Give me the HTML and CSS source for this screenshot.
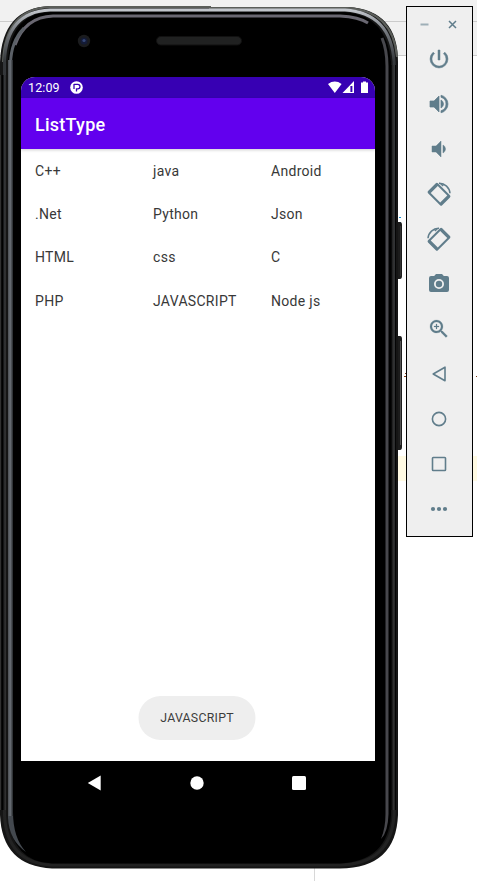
FILE: index.html
```html
<!DOCTYPE html>
<html lang="en">
<head>
<meta charset="utf-8">
<title>ListType</title>
<link rel="stylesheet" href="styles.css">
</head>
<body>
<div class="desktop">
  <div class="strip strip-one"></div>
  <div class="strip strip-two"></div>
  <div class="highlight"></div>
  <div class="divider"></div>
  <svg class="marks" width="80" height="165" viewBox="397 214 80 165">
    <path fill="#168bd0" d="M399 217h2v1h-2zM400 222h1v1h-1z"/>
    <path fill="#803b18" d="M404 376h3v1h-3zM405 373h1v1h-1zM476 376h1v1h-1z"/>
  </svg>

  <div class="phone">
    <svg class="shell" width="403" height="881" viewBox="0 0 403 881">
      <defs>
        <linearGradient id="rim" x1="0" x2="0" y1="0" y2="1">
          <stop offset="0" stop-color="#c2c6cc"/><stop offset=".025" stop-color="#75797f"/><stop offset=".06" stop-color="#34373a"/><stop offset="1" stop-color="#222"/>
        </linearGradient>
        <linearGradient id="left" x1="0" x2="1" y1="0" y2="0">
          <stop offset="0" stop-color="#4b4e52"/><stop offset=".45" stop-color="#6b7178"/><stop offset="1" stop-color="#24272a"/>
        </linearGradient>
      </defs>
      <path fill="#1c1c1c" d="M396 222h4q2 0 2 3v51q0 3-2 3h-4zM396 336h4q2 0 2 3v108q0 3-2 3h-4z"/>
      <path stroke="#555" d="M400.500 341v104"/>
      <path stroke="#333" d="M400.500 226v50"/>
      <path fill="#151515" d="M50 6H210V7H348Q398 10 398 62V815Q396 868 340 868.500H52Q2 866 0 815V62Q2 8 50 6Z"/>
      <path fill="none" stroke="#5b5e5a" stroke-width="2" d="M3 62Q5 9 50 7H210V8H348Q393 11 397 57"/>
      <path fill="none" stroke="url(#rim)" stroke-width="3" d="M4.500 815V62Q6 12 50 10H345Q391 13 394 62V815Q391 864 340 865H52Q7 863 4.500 815Z"/>
      <path fill="#000" d="M8 815V62Q10 14 50 12H345Q387 16 391 62V815Q388 861 340 863.500H52Q12 862 8 815Z"/>
      <path fill="none" stroke="#696771" stroke-width="3" d="M15 45Q25 17 53 16H340Q359 17 368 23"/>
      <path fill="none" stroke="#5b6067" stroke-width="3" d="M24 28Q11 41 10.500 64"/>
      <path fill="#43484e" d="M8 818V812H13Q13 838 26 852Q9 840 8 818Z"/>
      <rect x="8" y="60" width="5" height="756" fill="url(#left)"/>
      <path fill="none" stroke="#47474c" stroke-width="3" d="M382 38Q387 50 387 66V814"/>
      <path fill="#47474c" d="M385.500 814h3Q388 832 381 839Q385.500 828 385.500 814Z"/>
      <path stroke="#000" stroke-width="2" d="M2.500 75V810M390.500 65V810"/>
      <path stroke="#303030" d="M.5 75V810M5.500 75V810M393.500 65V810"/>
      <path stroke="#050505" d="M395.500 65V810"/>
      <circle cx="84" cy="41" r="6.200" fill="#1b1c1e"/>
      <circle cx="84" cy="41" r="3.500" fill="#141b36"/>
      <circle cx="84" cy="40.500" r="1.600" fill="#344777"/>
      <rect x="156.500" y="36.500" width="85" height="8.500" rx="4.200" fill="#202121" stroke="#111"/>
    </svg>

    <main class="screen">
      <header class="status">
        <span class="clock">12:09</span>
        <svg class="notice" width="13" height="13" viewBox="0 0 13 13">
          <circle cx="6.500" cy="6.500" r="6.300" fill="#fff"/>
          <path fill="none" stroke="#3700b3" stroke-width="1.300" d="M4 3.300h3.700a2.300 2.300 0 0 1 0 4.600h-1.200v2.600M4 3v5"/>
        </svg>
        <svg class="signals" width="41" height="13" viewBox="0 0 41 13">
          <path fill="#fff" d="M0 3Q6.800-1.800 13.600 3L6.800 12ZM26 0V12H14.500ZM35 .5h3v1h2v10.600h-7V1.500h2z"/>
          <path fill="#3700b3" d="M22.400 5h2v6h-2z"/>
        </svg>
      </header>
      <div class="appbar"><h1>ListType</h1></div>
      <div class="grid">
        <span>C++</span><span>java</span><span>Android</span>
        <span>.Net</span><span>Python</span><span>Json</span>
        <span>HTML</span><span>css</span><span>C</span>
        <span>PHP</span><span>JAVASCRIPT</span><span>Node js</span>
      </div>
      <div class="toast">JAVASCRIPT</div>
    </main>
    <nav class="nav">
      <svg width="16" height="16" viewBox="0 0 16 16"><path d="M.8 8 13.700.5v15z"/></svg>
      <svg width="16" height="16" viewBox="0 0 16 16"><circle cx="8" cy="8" r="6.700"/></svg>
      <svg width="16" height="16" viewBox="0 0 16 16"><rect x="1" y="1" width="14" height="14" rx="1.500"/></svg>
    </nav>
  </div>

  <aside class="toolbar">
    <div class="window">
      <svg width="9" height="9" viewBox="0 0 9 9"><path stroke="#9eafb7" stroke-width="2" d="M.5 4.500h8"/></svg>
      <svg width="9" height="9" viewBox="0 0 9 9"><path stroke="#607d8b" stroke-width="1.500" d="m1 1 7 7m0-7-7 7"/></svg>
    </div>
    <div class="tool"><svg viewBox="0 0 24 24"><path d="M13 3h-2v10h2V3zm4.830 2.170-1.420 1.420A6.920 6.920 0 0 1 19 12a7 7 0 1 1-11.410-5.420L6.170 5.170A8.930 8.930 0 0 0 3 12a9 9 0 0 0 18 0 8.930 8.930 0 0 0-3.170-6.830z" stroke="#607d8b" stroke-width=".5"/></svg></div>
    <div class="tool"><svg viewBox="0 0 24 24"><path d="M3 9v6h4l5 5V4L7 9H3zm13.500 3A4.500 4.500 0 0 0 14 7.970v8.050A4.500 4.500 0 0 0 16.500 12zM14 3.230v2.060a7 7 0 0 1 0 13.420v2.060a9 9 0 0 0 0-17.540z" stroke="#607d8b" stroke-width=".7"/></svg></div>
    <div class="tool"><svg viewBox="0 0 24 24"><path d="M18.500 12A4.500 4.500 0 0 0 16 7.970v8.050A4.500 4.500 0 0 0 18.500 12zM5 9v6h4l5 5V4L9 9H5z" stroke="#607d8b" stroke-width=".5"/></svg></div>
    <div class="tool"><svg viewBox="0 0 24 24"><g id="rotate"><path fill-rule="evenodd" transform="rotate(45 12 12.300)" d="M3.500 5.300h17a1.500 1.500 0 0 1 1.500 1.500v11a1.500 1.500 0 0 1-1.500 1.500h-17A1.500 1.500 0 0 1 2 17.800v-11a1.500 1.500 0 0 1 1.500-1.500zM5.300 7.300v10h13.400v-10z"/><path fill="none" stroke="#607d8b" stroke-width="1.500" d="M12 1.300A10.700 10.700 0 0 1 23 11.300"/><path d="m12 .8 5 2.300-1.500 1.500z"/></g></svg></div>
    <div class="tool"><svg viewBox="0 0 24 24"><use href="#rotate" transform="matrix(-1 0 0 1 24 0)"/></svg></div>
    <div class="tool"><svg viewBox="0 0 24 24"><circle cx="12" cy="12" r="3.200"/><path d="M9 2 7.170 4H4a2 2 0 0 0-2 2v12a2 2 0 0 0 2 2h16a2 2 0 0 0 2-2V6a2 2 0 0 0-2-2h-3.170L15 2H9zm3 15a5 5 0 1 1 0-10 5 5 0 0 1 0 10z"/></svg></div>
    <div class="tool"><svg viewBox="0 0 24 24"><path d="M15.500 14h-.79l-.28-.27a6.500 6.500 0 1 0-.7.700l.27.280v.79l5 4.990L20.490 19l-4.990-5zm-6 0a4.500 4.500 0 1 1 0-9 4.500 4.500 0 0 1 0 9zM12 10h-2v2H9v-2H7V9h2V7h1v2h2v1z" stroke="#607d8b" stroke-width=".2"/></svg></div>
    <div class="tool line"><svg viewBox="0 0 24 24"><path d="M6.200 12 18 5.200v13.600z"/></svg></div>
    <div class="tool line"><svg viewBox="0 0 24 24"><circle cx="12" cy="12" r="6.600"/></svg></div>
    <div class="tool line"><svg viewBox="0 0 24 24"><rect x="5.500" y="5.500" width="13" height="13" rx=".7"/></svg></div>
    <div class="tool"><svg viewBox="0 0 24 24"><circle cx="6" cy="12" r="2.100"/><circle cx="12" cy="12" r="2.100"/><circle cx="18" cy="12" r="2.100"/></svg></div>
  </aside>
</div>
</body>
</html>
```
FILE: styles.css
```css
* { box-sizing: border-box; }
body { margin: 0; background: #fff; font-family: Roboto, sans-serif; }
svg { display: block; flex: none; }
.desktop { position: relative; width: 477px; height: 881px; overflow: hidden; }
.strip { background: #f1f1f1; border-bottom: 1px solid #cbcbcb; }
.strip-one { height: 22px; }
.strip-two { height: 34px; }
.highlight { position: absolute; left: 398px; top: 456px; width: 79px; height: 25px; background: #fffae3; }
.divider { position: absolute; left: 314px; top: 868px; width: 1px; height: 13px; background: #d8d8d8; }
.marks { position: absolute; left: 397px; top: 214px; }

.phone { position: absolute; left: 0; top: 0; width: 403px; height: 881px; padding: 77px 0 0 21px; }
.shell { position: absolute; left: 0; top: 0; }
.screen { position: relative; display: flex; flex-direction: column; width: 354px; height: 684px; background: #fff; border-radius: 14px 14px 0 0; overflow: hidden; }
.status { display: flex; align-items: center; height: 21px; padding: 0 6px 0 7px; background: #3700b3; color: #fff; }
.clock { width: 41px; font-size: 12.5px; line-height: 21px; letter-spacing: .1px; }
.notice { margin-left: 1px; }
.signals { margin-left: auto; }
.appbar { display: flex; align-items: center; height: 51px; padding: 2px 14px 0; background: #6200ee; color: #fff; box-shadow: 0 1px 3px rgba(0, 0, 0, .2); }
.appbar h1 { margin: 0; font-size: 18px; font-weight: 500; line-height: 24px; letter-spacing: .25px; }
.grid { display: grid; grid-template-columns: repeat(3, 118px); grid-auto-rows: 43.2px; color: #383838; font-size: 14px; letter-spacing: .3px; }
.grid span { padding-left: 14px; line-height: 44px; }
.toast { align-self: center; display: flex; align-items: center; justify-content: center; width: 117px; height: 44px; margin: auto 1px 21.5px 0; border-radius: 22px; background: #eee; color: #3c3c3c; font-size: 12.3px; letter-spacing: .27px; transform: translateX(-.5px); }
.nav { position: relative; display: flex; justify-content: space-between; width: 354px; height: 44px; padding: 14px 68px 0 66px; fill: #fff; }

.toolbar { position: absolute; left: 406px; top: 6px; width: 67px; height: 531px; border: 1px solid #000; background: #efefef; }
.window { display: flex; justify-content: space-between; height: 30px; padding: 12.5px 15px 0 13px; }
.tool { display: flex; justify-content: center; width: 64px; height: 45px; padding-top: 10px; fill: #607d8b; }
.tool svg { width: 24px; height: 24px; overflow: visible; }
.line { fill: none; stroke: #607d8b; stroke-width: 1.6; stroke-linejoin: round; }
```
